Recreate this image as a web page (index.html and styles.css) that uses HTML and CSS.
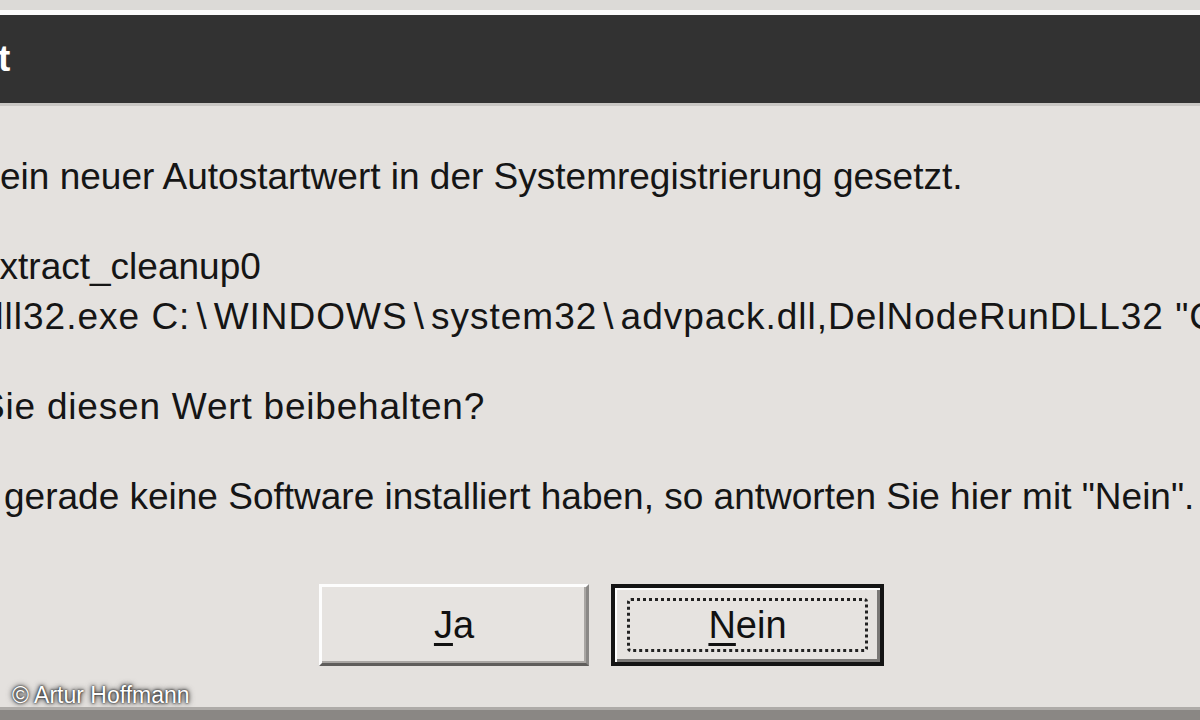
FILE: index.html
```html
<!DOCTYPE html>
<html lang="de">
<head>
  <meta charset="UTF-8">
  <meta name="viewport" content="width=device-width, initial-scale=1.0">
  <title>Autostart</title>
  <link rel="stylesheet" href="styles.css">
</head>
<body>

  <div class="window">
    <div class="frame-top"></div>

    <div class="titlebar">
      <span class="title">Autostart</span>
    </div>

    <div class="content">
      <p class="msg">ein neuer Autostartwert in der Systemregistrierung gesetzt.</p>

      <div class="msg-block">
        <p class="msg indent-name">extract_cleanup0</p>
        <p class="msg indent-cmd">dll32.exe C:<span class="sep">\</span>WINDOWS<span class="sep">\</span>system32<span class="sep">\</span>advpack.dll,DelNodeRunDLL32 "C:<span class="sep">\</span>WINDOWS<span class="sep">\</span>TEMP<span class="sep">\</span></p>
      </div>

      <p class="msg indent-question">Sie diesen Wert beibehalten?</p>

      <p class="msg indent-hint">gerade keine Software installiert haben, so antworten Sie hier mit "Nein".</p>

      <div class="buttons">
        <button class="btn"><u>J</u>a</button>
        <button class="btn default"><u>N</u>ein</button>
      </div>

      <div class="credit">© Artur Hoffmann</div>
    </div>

    <div class="frame-bottom"></div>
  </div>

</body>
</html>
```

FILE: styles.css
```css
body {
  margin: 0;
  overflow: hidden;
  background-color: #e4e1de;
  font-family: "Liberation Sans", Arial, sans-serif;
  color: #151515;
}

.window {
  height: 720px;
  display: flex;
  flex-direction: column;
  overflow: hidden;
}

.frame-top {
  height: 10px;
  background-color: #dcdad7;
  border-bottom: 5px solid #fbfbfb;
}

.titlebar {
  height: 88px;
  background-color: #323232;
  border-bottom: 3px solid #c9c7c4;
  overflow: hidden;
  white-space: nowrap;
}

.title {
  display: inline-block;
  margin-left: -154px;
  font-size: 37px;
  font-weight: bold;
  line-height: 88px;
  color: #fff;
}

.content {
  flex: 1;
  position: relative;
  padding-top: 46px;
  overflow: hidden;
}

.msg {
  margin: 0 0 40px 0;
  font-size: 37px;
  line-height: 50px;
  white-space: nowrap;
}

.msg-block {
  margin-bottom: 40px;
}

.msg-block .msg {
  margin: 0;
}

.indent-name {
  text-indent: -21px;
}

.indent-cmd {
  text-indent: -17px;
  letter-spacing: 1px;
}

.sep {
  padding: 0 6px;
}

.indent-question {
  text-indent: -20px;
  letter-spacing: 0.8px;
}

.indent-hint {
  text-indent: 4px;
}

.buttons {
  display: flex;
  gap: 22px;
  padding-left: 319px;
  margin-top: 62px;
}

.btn {
  position: relative;
  width: 270px;
  height: 82px;
  padding: 0;
  font-family: "Liberation Sans", Arial, sans-serif;
  font-size: 38px;
  color: #111;
  background-color: #e6e3e0;
  border: 3px solid;
  border-color: #fdfdfd #8a8886 #5f5d5b #fdfdfd;
  box-shadow: inset -2px -2px 0 #a9a6a3;
}

.btn u {
  text-decoration-thickness: 3px;
  text-underline-offset: 5px;
}

.btn.default {
  width: 273px;
  border: 4px solid #141414;
  box-shadow: inset 2px 2px 0 #fdfdfd, inset -3px -3px 0 #7a7876;
}

.btn.default::after {
  content: "";
  position: absolute;
  top: 10px;
  left: 12px;
  right: 12px;
  bottom: 10px;
  border: 3px dotted #222;
  border-radius: 4px;
}

.credit {
  position: absolute;
  left: 12px;
  bottom: 0;
  font-size: 23px;
  line-height: 1;
  color: #fff;
  text-shadow: 0 0 2px #111, 0 0 4px #333, 0 0 6px #555;
}

.frame-bottom {
  height: 10px;
  background-color: #8a8784;
  border-top: 3px solid #aeaba8;
}
```
